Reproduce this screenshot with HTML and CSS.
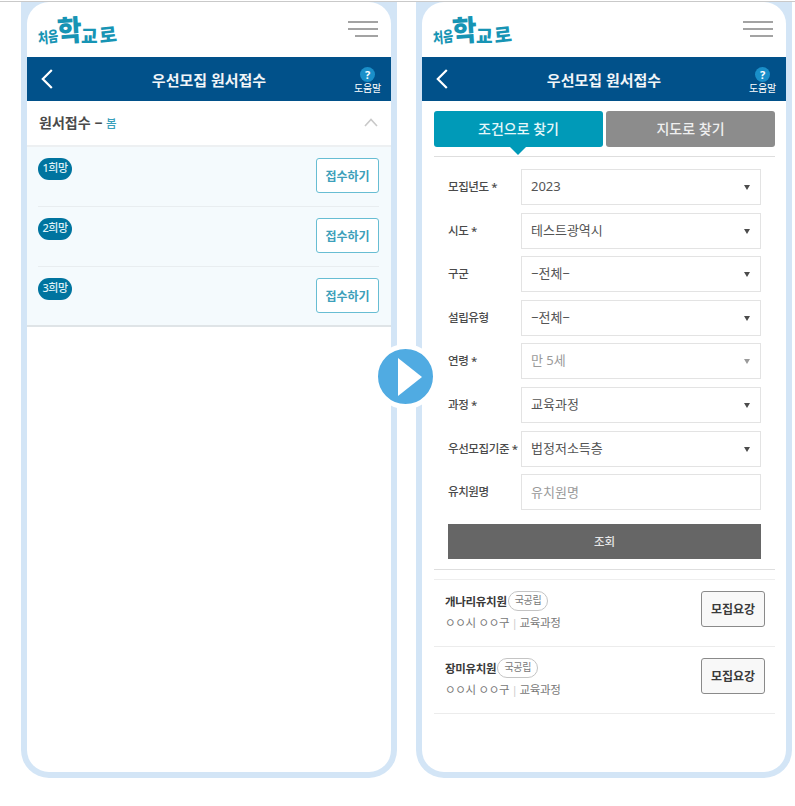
FILE: index.html
```html
<!DOCTYPE html>
<html lang="ko">
<head>
    <meta charset="UTF-8">
    <meta name="viewport" content="width=device-width, initial-scale=1.0">
    <title>우선모집 원서접수</title>
    <link rel="stylesheet" href="styles.css">
</head>
<body>
    <div class="top-line"></div>
    <div class="stage">
        <!-- Left phone: application list -->
        <div class="phone">
            <div class="screen">
                <header class="app-header">
                    <div class="logo"><span class="logo-a">처음</span><span class="logo-b">학</span><span class="logo-c">교</span><span class="logo-d">로</span></div>
                    <div class="burger"><i></i><i></i><i></i></div>
                </header>
                <nav class="nav-bar">
                    <svg class="back" width="12" height="20" viewBox="0 0 12 20"><path d="M10.8 1 1.8 10l9 9" fill="none" stroke="#fff" stroke-width="2.2"/></svg>
                    <div class="nav-title">우선모집 원서접수</div>
                    <div class="help"><span class="help-icon">?</span><span class="help-text">도움말</span></div>
                </nav>
                <div class="section-head">
                    <div class="section-title">원서접수 <em>−</em> <span>봄</span></div>
                    <svg width="14" height="9" viewBox="0 0 14 9"><path d="M1 8l6-6.5L13 8" fill="none" stroke="#c9c9c9" stroke-width="1.6"/></svg>
                </div>
                <div class="apply-list">
                    <div class="apply-row">
                        <span class="pill">1희망</span>
                        <button class="apply-btn">접수하기</button>
                    </div>
                    <div class="apply-row">
                        <span class="pill">2희망</span>
                        <button class="apply-btn">접수하기</button>
                    </div>
                    <div class="apply-row">
                        <span class="pill">3희망</span>
                        <button class="apply-btn">접수하기</button>
                    </div>
                </div>
            </div>
        </div>

        <!-- Right phone: search form -->
        <div class="phone">
            <div class="screen">
                <header class="app-header">
                    <div class="logo"><span class="logo-a">처음</span><span class="logo-b">학</span><span class="logo-c">교</span><span class="logo-d">로</span></div>
                    <div class="burger"><i></i><i></i><i></i></div>
                </header>
                <nav class="nav-bar">
                    <svg class="back" width="12" height="20" viewBox="0 0 12 20"><path d="M10.8 1 1.8 10l9 9" fill="none" stroke="#fff" stroke-width="2.2"/></svg>
                    <div class="nav-title">우선모집 원서접수</div>
                    <div class="help"><span class="help-icon">?</span><span class="help-text">도움말</span></div>
                </nav>
                <div class="content">
                    <div class="tabs">
                        <div class="tab active">조건으로 찾기</div>
                        <div class="tab">지도로 찾기</div>
                    </div>
                    <form class="search-form">
                        <label>모집년도 <b>*</b></label>
                        <div class="select"><span>2023</span></div>
                        <label>시도 <b>*</b></label>
                        <div class="select"><span>테스트광역시</span></div>
                        <label>구군</label>
                        <div class="select"><span>−전체−</span></div>
                        <label>설립유형</label>
                        <div class="select"><span>−전체−</span></div>
                        <label>연령 <b>*</b></label>
                        <div class="select disabled"><span>만 5세</span></div>
                        <label>과정 <b>*</b></label>
                        <div class="select"><span>교육과정</span></div>
                        <label>우선모집기준 <b>*</b></label>
                        <div class="select"><span>법정저소득층</span></div>
                        <label>유치원명</label>
                        <input class="text-input" type="text" placeholder="유치원명">
                        <button type="button" class="search-btn">조회</button>
                    </form>
                    <div class="results">
                        <div class="result-row">
                            <div>
                                <div class="result-name">개나리유치원<span class="tag">국공립</span></div>
                                <div class="result-info">ㅇㅇ시 ㅇㅇ구<i>|</i>교육과정</div>
                            </div>
                            <button class="guide-btn">모집요강</button>
                        </div>
                        <div class="result-row">
                            <div>
                                <div class="result-name">장미유치원<span class="tag">국공립</span></div>
                                <div class="result-info">ㅇㅇ시 ㅇㅇ구<i>|</i>교육과정</div>
                            </div>
                            <button class="guide-btn">모집요강</button>
                        </div>
                    </div>
                </div>
            </div>
        </div>

        <div class="play">
            <svg width="24" height="38" viewBox="0 0 24 38"><polygon points="0,0 24,19 0,38" fill="#fff"/></svg>
        </div>
    </div>
</body>
</html>
```

FILE: styles.css
```css
* {
    margin: 0;
    padding: 0;
    box-sizing: border-box;
    font-family: "Noto Sans", "Noto Sans CJK KR", sans-serif;
}

body {
    background: white;
    overflow: hidden;
}

.top-line {
    height: 1px;
    margin-top: 1px;
    background: #c9c9c9;
}

.stage {
    position: relative;
    display: flex;
    gap: 19px;
    padding-left: 21px;
}

.phone {
    width: 376px;
    height: 776px;
    padding: 0 6px 6px;
    background: #d3e5f6;
    border-radius: 0 0 28px 28px;
}

.screen {
    height: 100%;
    background: white;
    border-radius: 22px;
    overflow: hidden;
}

/* Header */
.app-header {
    height: 55px;
    display: flex;
    justify-content: space-between;
    align-items: center;
    padding: 0 12px;
}

.logo {
    display: flex;
    align-items: flex-end;
    height: 34px;
    color: #1794b4;
    font-weight: 900;
    line-height: 1;
}

.logo span {
    font-family: "Noto Sans CJK KR", sans-serif;
    display: block;
}

.logo-a {
    font-size: 11px;
    margin-left: -1px;
    margin-bottom: 5px;
    transform: scaleY(1.35) rotate(-6deg);
}

.logo-b {
    font-size: 29px;
    margin-left: -2px;
    margin-bottom: 4px;
    transform: scaleX(.92) rotate(-4deg);
}

.logo-c {
    font-size: 18px;
    margin-left: -2px;
    margin-bottom: 3px;
}

.logo-d {
    font-size: 19px;
    margin-left: 1px;
    margin-bottom: 4px;
    transform: rotate(-6deg);
}

.burger {
    width: 30px;
    display: flex;
    flex-direction: column;
    align-items: flex-end;
    gap: 5px;
    margin: -2px 1px 0 0;
}

.burger i {
    display: block;
    width: 100%;
    height: 2px;
    background: #a3a3a3;
}

.burger i:last-child {
    width: 23px;
}

.nav-bar {
    height: 44px;
    display: grid;
    grid-template-columns: 1fr auto 1fr;
    align-items: center;
    padding: 0 10px;
    background: #01518a;
    color: white;
}

.back {
    margin-left: 4px;
}

.nav-title {
    font-size: 15px;
    font-weight: 700;
    color: #f1f5f8;
}

.help {
    justify-self: end;
    display: flex;
    flex-direction: column;
    align-items: center;
    margin-top: 2px;
}

.help-icon {
    width: 15px;
    height: 15px;
    border-radius: 50%;
    background: #1a8fc9;
    font-size: 11px;
    font-weight: 700;
    line-height: 15px;
    text-align: center;
}

.help-text {
    font-size: 10px;
    line-height: 12px;
    letter-spacing: -.2px;
}

/* Left phone */
.section-head {
    height: 46px;
    display: flex;
    justify-content: space-between;
    align-items: center;
    padding: 0 13px 2px 12px;
    border-bottom: 2px solid #edf0f2;
}

.section-title {
    font-size: 14px;
    font-weight: 700;
    color: #4a4a4a;
}

.section-title em {
    font-style: normal;
}

.section-title span {
    font-size: 11.5px;
    font-weight: 500;
    color: #3aa0bb;
}

.apply-list {
    padding: 0 12px 0 11px;
    background: #f4fafd;
    border-bottom: 2px solid #dfe4e7;
    box-sizing: content-box;
    margin: 0;
    height: 178px;
}

.apply-row {
    height: 60px;
    display: flex;
    justify-content: space-between;
    align-items: flex-start;
    padding-top: 11px;
    border-bottom: 1px solid #e8edf0;
}

.apply-row:last-child {
    border-bottom: none;
}

.pill {
    width: 34px;
    height: 22px;
    border-radius: 11px;
    background: #00749f;
    color: #dff1f7;
    font-size: 11px;
    font-weight: 500;
    line-height: 20px;
    text-align: center;
    letter-spacing: -.5px;
}

.apply-btn {
    width: 63px;
    height: 35px;
    background: white;
    border: 1.5px solid #67bdd3;
    border-radius: 3px;
    color: #3c9fba;
    font-size: 12px;
    font-weight: 700;
}

/* Right phone */
.content {
    padding: 10px 11px 0 12px;
}

.tabs {
    display: grid;
    grid-template-columns: 169px 169px;
    gap: 3px;
    padding-bottom: 9px;
    border-bottom: 1px solid #dedede;
}

.tab {
    position: relative;
    height: 36px;
    border-radius: 3px;
    background: #8c8c8c;
    color: #efefef;
    font-size: 14px;
    font-weight: 500;
    line-height: 35px;
    text-align: center;
}

.tab.active {
    background: #009ab8;
    color: #e6f7fa;
}

.tab.active::after {
    content: "";
    position: absolute;
    left: 76px;
    top: 36px;
    border: 8px solid transparent;
    border-top-color: #009ab8;
    border-bottom: none;
}

.search-form {
    display: grid;
    grid-template-columns: 73px 240px;
    align-items: center;
    row-gap: 7.6px;
    padding: 12px 14px 10px;
    border-bottom: 1px solid #dedede;
}

.search-form label {
    font-size: 11.5px;
    font-weight: 500;
    color: #4a4a4a;
    letter-spacing: -.4px;
    white-space: nowrap;
    margin-top: -2px;
}

.search-form label b {
    font-weight: 500;
}

.select {
    position: relative;
    height: 36px;
    padding-left: 9px;
    border: 1.5px solid #e3e3e3;
    color: #555;
    font-size: 13px;
    line-height: 33px;
}

.select::after {
    content: "";
    position: absolute;
    right: 10px;
    top: 15px;
    border: 3px solid transparent;
    border-top: 5px solid #4c4c4c;
    border-bottom: none;
}

.select.disabled {
    color: #9a9a9a;
}

.select.disabled::after {
    border-top-color: #9a9a9a;
}

.text-input {
    height: 36px;
    padding-left: 9px;
    border: 1.5px solid #e3e3e3;
    font-size: 13px;
    outline: none;
}

.text-input::placeholder {
    color: #9a9a9a;
}

.search-btn {
    grid-column: 1 / 3;
    height: 35px;
    margin-top: 6px;
    background: #666;
    border: none;
    color: #e6e6e6;
    font-size: 11.5px;
    font-weight: 500;
}

.results {
    margin-top: 9px;
    border-top: 1px solid #eeeeee;
}

.result-row {
    height: 67px;
    display: flex;
    justify-content: space-between;
    align-items: flex-start;
    padding: 11px 10px 0 11px;
    border-bottom: 1px solid #ececec;
}

.result-name {
    display: flex;
    align-items: center;
    height: 20px;
    font-size: 11.5px;
    font-weight: 700;
    color: #3a3a3a;
    letter-spacing: -.3px;
}

.tag {
    height: 20px;
    margin-left: 1px;
    padding: 0 6px;
    border: 1.5px solid #c4c4c4;
    border-radius: 10px;
    color: #777;
    font-size: 10px;
    font-weight: 400;
    line-height: 17px;
}

.result-info {
    margin-top: 2px;
    font-size: 11.5px;
    line-height: 20px;
    color: #777;
    letter-spacing: -.3px;
}

.result-info i {
    margin: 0 2px;
    font-style: normal;
    color: #ccc;
}

.guide-btn {
    width: 64px;
    height: 36px;
    background: #f8f8f8;
    border: 1.5px solid #8a8a8a;
    border-radius: 3px;
    color: #3a3a3a;
    font-size: 12px;
    font-weight: 700;
}

/* Play badge between the two phones */
.play {
    position: absolute;
    left: 373px;
    top: 342px;
    width: 65px;
    height: 65px;
    display: flex;
    align-items: center;
    justify-content: flex-start;
    padding-left: 20px;
    background: #50abe2;
    border: 5px solid white;
    border-radius: 50%;
}
```
